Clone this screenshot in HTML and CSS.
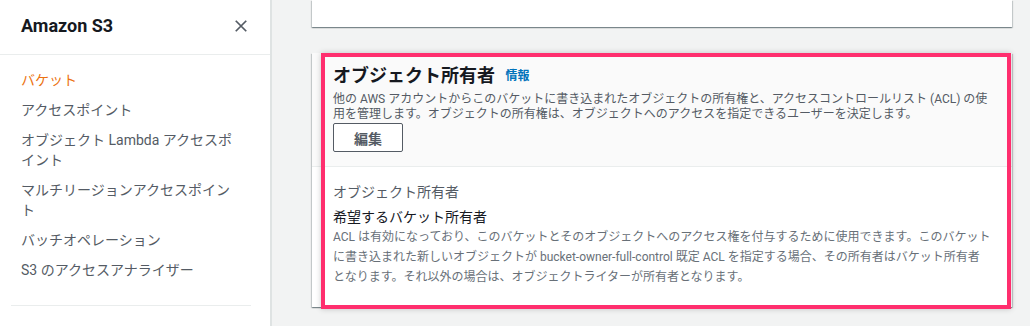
FILE: index.html
```html
<!DOCTYPE html>
<html lang="ja">

<head>
  <meta charset="UTF-8" />
  <meta name="viewport" content="width=device-width, initial-scale=1.0" />
  <title>Amazon S3 - オブジェクト所有者</title>
  <link rel="stylesheet" href="styles.css">
</head>

<body>
  <div class="layout">
    <nav class="sidebar">
      <div class="sidebar-header">
        <span class="sidebar-title">Amazon S3</span>
        <svg class="close-icon" width="16" height="16" viewBox="0 0 16 16">
          <path d="M2 2 L14 14 M14 2 L2 14" stroke="#545b64" stroke-width="2" fill="none" />
        </svg>
      </div>
      <ul class="nav-list">
        <li class="active">バケット</li>
        <li>アクセスポイント</li>
        <li>オブジェクト Lambda アクセスポイント</li>
        <li>マルチリージョンアクセスポイント</li>
        <li>バッチオペレーション</li>
        <li>S3 のアクセスアナライザー</li>
      </ul>
      <hr class="nav-divider" />
    </nav>

    <main class="content">
      <div class="card card-top"></div>

      <div class="card card-owner">
        <div class="card-header">
          <h2>オブジェクト所有者 <a class="info-link">情報</a></h2>
          <p class="card-desc">他の AWS アカウントからこのバケットに書き込まれたオブジェクトの所有権と、アクセスコントロールリスト (ACL) の使用を管理します。オブジェクトの所有権は、オブジェクトへのアクセスを指定できるユーザーを決定します。</p>
          <button class="btn">編集</button>
        </div>
        <div class="card-body">
          <div class="field-label">オブジェクト所有者</div>
          <div class="field-value">希望するバケット所有者</div>
          <p class="field-desc">ACL は有効になっており、このバケットとそのオブジェクトへのアクセス権を付与するために使用できます。このバケットに書き込まれた新しいオブジェクトが bucket-owner-full-control 既定 ACL を指定する場合、その所有者はバケット所有者<br>となります。それ以外の場合は、オブジェクトライターが所有者となります。</p>
        </div>
        <!-- highlight frame drawn over the card -->
        <div class="highlight"></div>
      </div>
    </main>
  </div>
</body>

</html>
```

FILE: styles.css
```css
* {
  box-sizing: border-box;
}

body {
  margin: 0;
  font-family: Roboto, "Noto Sans CJK JP", sans-serif;
  background: #f2f3f3;
  color: #16191f;
  overflow: hidden;
}

.layout {
  display: flex;
  height: 326px;
}

/* Sidebar */
.sidebar {
  width: 272px;
  flex-shrink: 0;
  background: #fff;
  border-right: 2px solid #dfe3e3;
}

.sidebar-header {
  display: flex;
  align-items: flex-start;
  justify-content: space-between;
  height: 55px;
  padding: 15px 22px 0 21px;
  border-bottom: 1px solid #eaeded;
}

.sidebar-title {
  font-size: 18px;
  line-height: 22px;
  font-weight: 700;
}

.close-icon {
  width: 14px;
  height: 14px;
  margin-top: 4px;
}

.nav-list {
  list-style: none;
  margin: 0;
  padding: 10px 34px 0 21px;
}

.nav-list li {
  font-size: 14px;
  line-height: 20px;
  padding: 5px 0;
  color: #545b64;
}

.nav-list li.active {
  color: #ec7211;
}

.nav-divider {
  margin: 20px 19px 0 11px;
  border: none;
  border-top: 1px solid #eaeded;
}

/* Main area */
.content {
  flex: 1;
  padding: 0 18px 0 40px;
}

.card {
  background: #fff;
  box-shadow: 0 1px 1px 0 rgba(0, 28, 36, 0.3), 1px 1px 1px 0 rgba(0, 28, 36, 0.15), -1px 1px 1px 0 rgba(0, 28, 36, 0.15);
}

.card-top {
  height: 27px;
  margin-bottom: 26px;
}

.card-owner {
  position: relative;
  height: 254px;
}

.card-header {
  background: #fafafa;
  padding: 12px 20px 14px 21px;
  border-bottom: 1px solid #eaeded;
}

.card-header h2 {
  margin: 0;
  font-size: 18px;
  line-height: 22px;
  font-weight: 700;
  color: #16191f;
}

.info-link {
  font-size: 12px;
  font-weight: 700;
  color: #0073bb;
  margin-left: 6px;
  vertical-align: 2px;
}

.card-desc {
  margin: 5px 0 0;
  font-size: 12px;
  line-height: 15px;
  color: #545b64;
}

.btn {
  display: block;
  width: 70px;
  height: 29px;
  margin-top: 1px;
  font-family: inherit;
  font-size: 14px;
  font-weight: 700;
  color: #545b64;
  background: #fff;
  border: 1px solid #545b64;
  border-radius: 2px;
}

.card-body {
  padding: 14px 20px 0 21px;
}

.field-label {
  font-size: 14px;
  line-height: 22px;
  color: #545b64;
}

.field-value {
  font-size: 14px;
  line-height: 22px;
  margin-top: 3px;
  color: #16191f;
}

.field-desc {
  margin: -1px 0 0;
  font-size: 12px;
  line-height: 20px;
  color: #687078;
}

.highlight {
  position: absolute;
  left: 9px;
  top: 0;
  right: 1px;
  bottom: -2px;
  border: 4px solid #ff2e6e;
  box-shadow: 0 0 6px rgba(0, 0, 0, 0.2);
  pointer-events: none;
}
```
